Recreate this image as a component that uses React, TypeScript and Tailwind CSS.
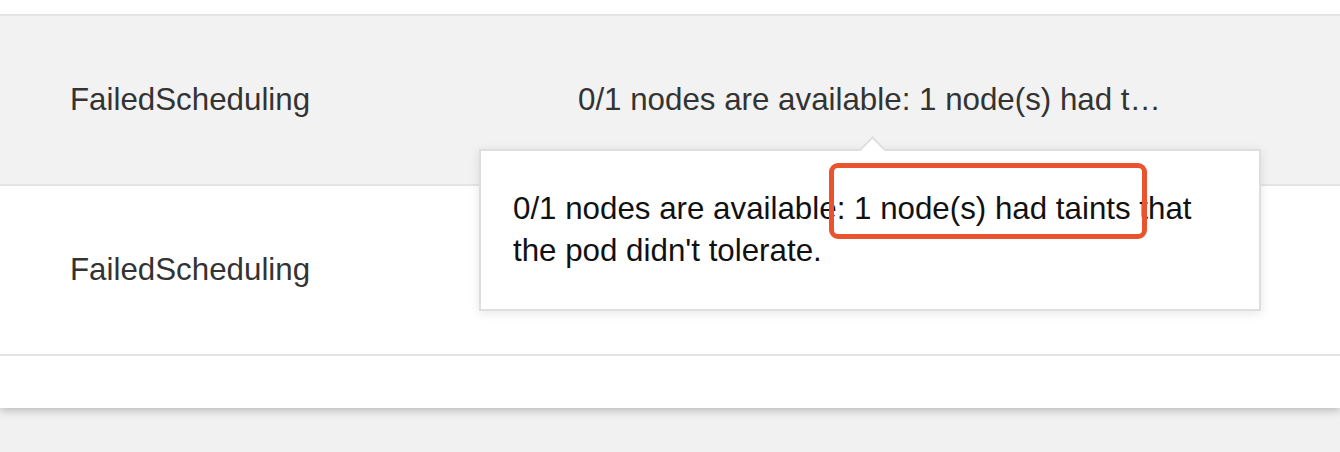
import React from "react";

const font = { fontFamily: '"Liberation Sans", Arial, Helvetica, sans-serif' };

function Row({ bg, label, message }: { bg: string; label: string; message: string }) {
  return (
    <div className={`flex items-center h-[170px] border-t-[2px] border-[#e4e4e4] ${bg}`}>
      <div className="w-[578px] shrink-0 pl-[70px] text-[31.3px] text-[#333333]">{label}</div>
      <div className="text-[31.3px] text-[#333333] whitespace-nowrap">{message}</div>
    </div>
  );
}

export default function App() {
  return (
    <div className="w-[1340px] h-[452px] bg-[#f1f1f1] overflow-hidden" style={font}>
      <div className="relative bg-white h-[408px] pt-[14px] shadow-[0_3px_8px_rgba(0,0,0,0.22)]">
        <Row bg="bg-[#f2f2f2]" label="FailedScheduling" message="0/1 nodes are available: 1 node(s) had t…" />
        <Row bg="bg-white" label="FailedScheduling" message="0/1 nodes are available: 1 node(s) had t…" />
        <div className="border-t-[2px] border-[#e4e4e4]" />

        <div className="absolute left-[479px] top-[149px] w-[782px] bg-white border-[2px] border-[#dedede] shadow-[0_2px_10px_rgba(0,0,0,0.10)] pl-[32px] pr-[30px] pt-[37px] pb-[37px]">
          <div className="absolute left-[382px] top-[-11px] w-[19px] h-[19px] rotate-45 bg-white border-l-[2px] border-t-[2px] border-[#dedede]" />
          <p className="relative text-[31.3px] leading-[42px] text-[#111111]">
            0/1 nodes are available: 1 node(s) had taints that the pod didn't tolerate.
          </p>
        </div>

        <div className="absolute left-[829px] top-[163px] w-[318px] h-[76px] border-[5px] border-[#e9532d] rounded-[9px]" />
      </div>
    </div>
  );
}
